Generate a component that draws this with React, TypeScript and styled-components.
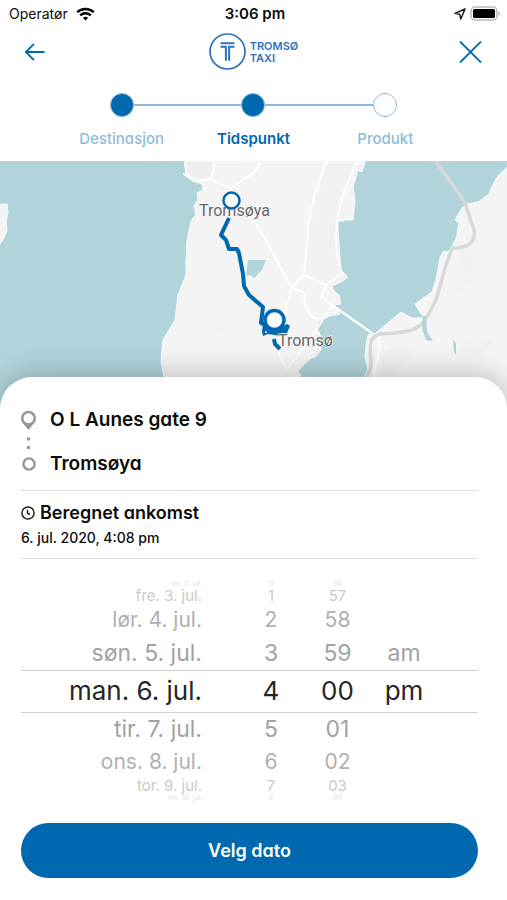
import React from "react";
import styled, { createGlobalStyle } from "styled-components";

const blue = "#0068ae";
const paleBlue = "#8dbbdb";

const GlobalStyle = createGlobalStyle`
  * { box-sizing: border-box; }
  body {
    margin: 0;
    background: #fff;
    color: #0c0c0c;
    font-family: Inter, "Liberation Sans", sans-serif;
  }
  button { font: inherit; padding: 0; border: 0; background: none; cursor: pointer; }
  ul, ol { list-style: none; margin: 0; padding: 0; }
  svg { display: block; }
`;

const Screen = styled.main`
  display: flex;
  flex-direction: column;
  min-height: 100vh;
`;

const StatusBar = styled.div`
  display: grid;
  grid-template-columns: 1fr auto 1fr;
  align-items: center;
  height: 27px;
  padding: 0 6px 0 9px;
  font-size: 14px;
`;

const StatusGroup = styled.div<{ $end?: boolean }>`
  display: flex;
  align-items: center;
  justify-content: ${(p) => (p.$end ? "flex-end" : "flex-start")};
  gap: ${(p) => (p.$end ? 4 : 8)}px;
`;

const Clock = styled.time`
  font-size: 15px;
  font-weight: 600;
`;

const Header = styled.header`
  display: grid;
  grid-template-columns: 1fr auto 1fr;
  align-items: center;
  height: 49px;
  padding: 0 24px;
`;

const IconButton = styled.button<{ $end?: boolean }>`
  justify-self: ${(p) => (p.$end ? "end" : "start")};
`;

const Brand = styled.div`
  display: flex;
  align-items: center;
  gap: 4px;
  color: #2f72bb;
`;

const BrandName = styled.div`
  font-size: 11px;
  line-height: 12px;
  font-weight: 600;
`;

const BrandLine = styled.div``;

const Steps = styled.ol`
  display: grid;
  grid-template-columns: repeat(3, 1fr);
  width: 78%;
  height: 85px;
  margin: 0 auto;
  padding-top: 17px;
`;

const Step = styled.li<{ $current?: boolean }>`
  text-align: center;
  font-size: 15px;
  line-height: 20px;
  font-weight: ${(p) => (p.$current ? 600 : 500)};
  color: ${(p) => (p.$current ? blue : paleBlue)};
  font-feature-settings: "cv11";
`;

const StepTrack = styled.div`
  display: flex;
  align-items: center;
  margin-bottom: 12px;
`;

const StepLine = styled.span<{ $hidden?: boolean }>`
  flex: 1;
  height: 2px;
  background: ${(p) => (p.$hidden ? "transparent" : paleBlue)};
`;

const StepDot = styled.span<{ $filled: boolean }>`
  width: 24px;
  height: 24px;
  border-radius: 50%;
  border: 1px solid ${paleBlue};
  background: ${(p) => (p.$filled ? blue : "#fff")};
`;

const MapArea = styled.section`
  height: 250px;
  background: #b1d4db;
`;

const Sheet = styled.section`
  position: relative;
  flex: 1;
  display: flex;
  flex-direction: column;
  margin-top: -34px;
  padding: 21px 29px 21px 21px;
  border-radius: 32px 32px 0 0;
  background: #fff;
  box-shadow: 0 -4px 28px rgba(0, 0, 0, 0.22);
`;

const RouteList = styled.div`
  position: relative;
  padding-bottom: 4px;
`;

const Route = styled.ol`
  font-size: 19px;
  line-height: 24px;
  font-weight: 600;
  font-feature-settings: "cv11";
`;

const RouteStop = styled.li`
  display: grid;
  grid-template-columns: 15px 1fr;
  align-items: center;
  gap: 14px;
  height: 44px;
`;

const RouteMark = styled.span`
  display: flex;
  justify-content: center;
`;

const RouteDots = styled.svg`
  position: absolute;
  left: 4px;
  top: 37px;
`;

const Arrival = styled.section`
  height: 69px;
  padding-top: 10px;
  border: solid #dedede;
  border-width: 1px 0;
  font-feature-settings: "cv11";
`;

const ArrivalTitle = styled.h2`
  display: flex;
  align-items: center;
  gap: 5px;
  margin: 0;
  font-size: 18px;
  line-height: 24px;
  font-weight: 600;
`;

const ArrivalTime = styled.p`
  margin: 3px 0 0;
  font-size: 14px;
  line-height: 20px;
  font-weight: 500;
`;

const Picker = styled.div`
  display: grid;
  grid-template-columns: 217fr 66fr 67fr 66fr 41fr;
  margin: 21px 0;
  background: linear-gradient(#cfcfcf, #cfcfcf) 0 90px / 100% 1px no-repeat,
    linear-gradient(#cfcfcf, #cfcfcf) 0 132px / 100% 1px no-repeat;
`;

const Wheel = styled.ul<{ $date?: boolean }>`
  padding-right: ${(p) => (p.$date ? 36 : 0)}px;
  text-align: ${(p) => (p.$date ? "right" : "center")};
`;

/* Rows shrink and fade with their distance from the selected one. */
const levels = [
  { height: 42, size: 26, color: "#262626" },
  { height: 34, size: 23, color: "#a2a2a2" },
  { height: 32, size: 21, color: "#b0b0b0" },
  { height: 16, size: 15, color: "#cacaca" },
  { height: 8, size: 7, color: "#e2e2e2" },
];

const WheelItem = styled.li<{ $level: number }>`
  height: ${(p) => levels[p.$level].height}px;
  line-height: ${(p) => levels[p.$level].height}px;
  font-size: ${(p) => levels[p.$level].size}px;
  color: ${(p) => levels[p.$level].color};
  white-space: nowrap;
`;

const Submit = styled.button`
  height: 55px;
  border-radius: 28px;
  background: ${blue};
  color: #fff;
  font-size: 18px;
  font-weight: 600;
  font-feature-settings: "cv11";
`;

const steps = [
  { name: "Destinasjon", filled: true },
  { name: "Tidspunkt", filled: true, current: true },
  { name: "Produkt", filled: false },
];

const wheels = [
  {
    label: "Dato",
    date: true,
    items: ["tor. 2. jul.", "fre. 3. jul.", "lør. 4. jul.", "søn. 5. jul.", "man. 6. jul.", "tir. 7. jul.", "ons. 8. jul.", "tor. 9. jul.", "fre. 10. jul."],
  },
  { label: "Time", items: ["12", "1", "2", "3", "4", "5", "6", "7", "8"] },
  { label: "Minutt", items: ["56", "57", "58", "59", "00", "01", "02", "03", "04"] },
  { label: "am/pm", items: ["", "", "", "am", "pm"] },
];

const WifiIcon = () => (
  <svg width="19" height="14" viewBox="0 0 19 14" fill="none" stroke="#000" strokeWidth="2.5" aria-hidden="true">
    <path d="M1.2 5.2C5.8.8 13.2.8 17.8 5.2" />
    <path d="M4.2 8.4c3-2.8 7.600-2.800 10.600 0" />
    <path d="M6.900 10.700c1.500-1.400 3.700-1.400 5.200 0L9.500 13.400z" fill="#000" stroke="none" />
  </svg>
);

const LocationIcon = () => (
  <svg width="12" height="12" viewBox="0 0 12 12" fill="none" stroke="#111" strokeWidth="1.4" strokeLinejoin="round" aria-hidden="true">
    <path d="M11 1 1 5.400l4.700.9L6.800 11z" />
  </svg>
);

const BatteryIcon = () => (
  <svg width="31" height="15" viewBox="0 0 31 15" aria-hidden="true">
    <rect x="1" y="1" width="26" height="13" rx="4" fill="#fff" stroke="#b9b9b9" strokeWidth="1.500" />
    <rect x="3" y="3" width="22" height="9" rx="1.500" fill="#000" />
    <path d="M28.500 5.200c2 .8 2 3.800 0 4.600z" fill="#b9b9b9" />
  </svg>
);

const BackIcon = () => (
  <svg width="21" height="20" viewBox="0 0 21 20" fill="none" stroke={blue} strokeWidth="1.800" aria-hidden="true">
    <path d="M20.500 10H2M10 1.800 1.800 10l8.200 8.200" />
  </svg>
);

const CloseIcon = () => (
  <svg width="26" height="22" viewBox="0 0 26 22" fill="none" stroke={blue} strokeWidth="1.800" aria-hidden="true">
    <path d="m3 0.500 21 21M24 .5l-21 21" />
  </svg>
);

const BrandIcon = () => (
  <svg width="37" height="37" viewBox="0 0 37 37" fill="none" stroke="#2f72bb" aria-hidden="true">
    <circle cx="18.500" cy="18.500" r="17.500" strokeWidth="1.700" />
    <path d="M11.500 10.200h14M11.500 13.800h5.400v14M25.500 13.800h-5.400v14" strokeWidth="2" />
  </svg>
);

const PinIcon = () => (
  <svg width="16" height="21" viewBox="0 0 16 21" aria-hidden="true">
    <path d="M8 0a8 8 0 0 0-8 8c0 4.500 4 7 8 12.500C12 15 16 12.500 16 8a8 8 0 0 0-8-8z" fill="#979797" />
    <circle cx="8" cy="8" r="5.300" fill="#fff" />
  </svg>
);

const RingIcon = () => (
  <svg width="14" height="14" viewBox="0 0 14 14" aria-hidden="true">
    <circle cx="7" cy="7" r="5.600" fill="none" stroke="#979797" strokeWidth="2.400" />
  </svg>
);

const ClockIcon = () => (
  <svg width="14" height="14" viewBox="0 0 14 14" fill="none" stroke="#222" strokeWidth="1.500" aria-hidden="true">
    <circle cx="7" cy="7" r="6.100" />
    <path d="M6.500 3.800v3.500l2.600 1.200" />
  </svg>
);

const RouteMap = () => (
  <svg width="100%" height="100%" viewBox="0 161 507 250" preserveAspectRatio="xMidYMin slice" role="img" aria-label="Kart over Tromsø">
    <rect y="161" width="507" height="250" fill="#b1d4db" />
    <g fill="#f4f4f4" stroke="#fafafa" strokeWidth="1" strokeLinejoin="round">
      <path d="M-2 204 7 204 8 212 6 222 7 230 4 238-2 247z" />
      <path d="M184 159 186 175 192 181 202 184 203 190 197 193 198 200 194 206 196 214 191 221 187 240 186 262 186 275 178 295 175 320 163 340 162 350 161 362 164 377 164 413 270 413 292 377 301 376 298 371 304 364 311 358 315 357 321 350 321 337 317 328 319 321 330 316 340 314 336 308 332 305 341 304 339 295 333 290 332 286 341 282 348 277 341 270 338 232 338 221 344 221 344 220 353 220 355 200 353 187 358 170 362 172 366 159z" />
      <path d="M509 165 497 177 488 195 478 202 467 204 462 208 455 220 459 223 456 239 449 251 443 252 440 258 436 280 432 292 425 297 415 304 421 314 424 318 412 318 401 312 376 333 368 335 366 345 365 357 368 370 362 380 360 413 509 413z" />
    </g>
    <path d="M187 161h26l-2 16-14 2-8-5z" fill="#efefef" />
    <g fill="#f1f1f1">
      <path d="M224 302 232 308 228 326 220 336 218 330 223 318zM460 252 480 246 474 272 464 290 458 292z" />
      <path d="M384 352 404 342 416 354 399 365 391 379 379 379zM460 349 472 335 492 341 480 357 462 359z" />
      <path d="M327 163 355 163C340 190 335 212 335 240L340 274 326 283 305 273 309 230z" />
    </g>
    <g fill="none" stroke="#fdfdfd" strokeWidth="2" strokeLinejoin="round" strokeLinecap="round">
      <path d="M184 174C192 181 201 183 211 179L215 161M211 179 230 189 255 172 261 161M327 161C315 188 308 214 308 237L304 275 292 287C277 265 270 242 254 222" />
      <path d="M357 161C344 188 336 212 336 237 336 252 337 264 342 273L326 285 304 275M326 285 322 296 332 306 313 335 287 370 279 355 284 315 292 287 304 293 305 305 312 317 318 319" />
      <path d="M332 305 372 333M379 336C382 354 374 366 372 384" strokeWidth="2.500" />
    </g>
    <path d="M434 159 460 195 466 206 474 230C476 240 470 249 452 248L446 265 436 300 428 315C420 333 401 333 380 334 366 338 371 352 371 364 371 375 362 380 362 390" fill="none" stroke="#d8d8d8" strokeWidth="3.500" strokeLinejoin="round" />
    <path d="M248 260H266L262 270 254 278 250 275 246 276zM423 315 426 317 427 332 433 341 426 340 422 328zM453 339 456 344 456 355 454 352z" fill="#b1d4db" />
    <g fill="none" stroke={blue} strokeWidth="4" strokeLinejoin="round">
      <path d="M229 218 221 235 226 240 229 249 237 249 239 253 243 274 244 286 249 295 263 307 261 323 267 325" />
      <path d="M274 339 275 344 280 349" />
    </g>
    <path d="M263 324 270 328 280 328 287 324 290 326 287 333 281 333 281 336 268 334 263 336 262 331zM266 330 265 333 267 333z" fill={blue} fillRule="evenodd" />
    <g fontFamily="Roboto, sans-serif" fontSize="16" fill="#656565" stroke="#fff" strokeWidth="1" strokeLinejoin="round" paintOrder="stroke">
      <text x="199" y="216">Tromsøya</text>
      <text x="278" y="346">Tromsø</text>
    </g>
    <g fill="#fff" stroke={blue}>
      <circle cx="231.500" cy="200.500" r="8" strokeWidth="2.500" />
      <circle cx="274.500" cy="320" r="9.500" strokeWidth="3.500" />
    </g>
  </svg>
);

export default function App() {
  return (
    <Screen>
      <GlobalStyle />
      <StatusBar>
        <StatusGroup>
          Operatør
          <WifiIcon />
        </StatusGroup>
        <Clock>3:06 pm</Clock>
        <StatusGroup $end>
          <LocationIcon />
          <BatteryIcon />
        </StatusGroup>
      </StatusBar>
      <Header>
        <IconButton aria-label="Tilbake"><BackIcon /></IconButton>
        <Brand>
          <BrandIcon />
          <BrandName>
            <BrandLine>TROMSØ</BrandLine>
            <BrandLine>TAXI</BrandLine>
          </BrandName>
        </Brand>
        <IconButton $end aria-label="Lukk"><CloseIcon /></IconButton>
      </Header>
      <Steps>
        {steps.map((step, i) => (
          <Step key={step.name} $current={step.current} aria-current={step.current ? "step" : undefined}>
            <StepTrack>
              <StepLine $hidden={i === 0} />
              <StepDot $filled={step.filled} />
              <StepLine $hidden={i === steps.length - 1} />
            </StepTrack>
            {step.name}
          </Step>
        ))}
      </Steps>
      <MapArea><RouteMap /></MapArea>
      <Sheet>
        <RouteList>
          <Route>
            <RouteStop><RouteMark><PinIcon /></RouteMark>O L Aunes gate 9</RouteStop>
            <RouteStop><RouteMark><RingIcon /></RouteMark>Tromsøya</RouteStop>
          </Route>
          <RouteDots width="7" height="16" viewBox="0 0 7 16" fill="#979797" aria-hidden="true">
            <circle cx="3.500" cy="4" r="1.800" />
            <circle cx="3.500" cy="12.500" r="1.800" />
          </RouteDots>
        </RouteList>
        <Arrival>
          <ArrivalTitle><ClockIcon />Beregnet ankomst</ArrivalTitle>
          <ArrivalTime>6. jul. 2020, 4:08 pm</ArrivalTime>
        </Arrival>
        <Picker role="group" aria-label="Velg tidspunkt">
          {wheels.map((wheel) => (
            <Wheel key={wheel.label} $date={wheel.date} role="listbox" aria-label={wheel.label}>
              {wheel.items.map((item, i) => (
                <WheelItem
                  key={i}
                  $level={Math.abs(i - 4)}
                  role={item ? "option" : "presentation"}
                  aria-selected={item ? i === 4 : undefined}
                >
                  {item}
                </WheelItem>
              ))}
            </Wheel>
          ))}
        </Picker>
        <Submit>Velg dato</Submit>
      </Sheet>
    </Screen>
  );
}
